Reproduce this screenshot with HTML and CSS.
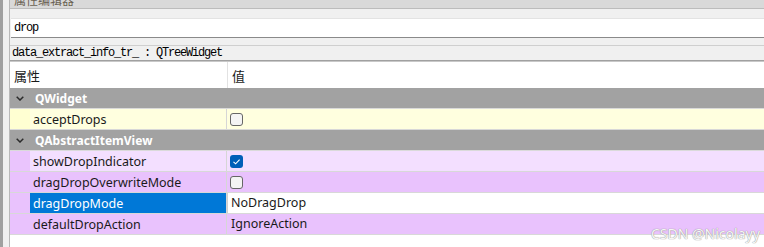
FILE: index.html
```html
<!DOCTYPE html>
<html lang="zh">
<head>
    <meta charset="UTF-8">
    <title>属性编辑器</title>
    <link rel="stylesheet" href="styles.css">
</head>
<body>
    <div class="splitter"></div>
    <div class="gutter"></div>
    <div class="panel">
        <div class="titlebar"><span>属性编辑器</span></div>
        <div class="filter">
            <div class="filter-box">drop</div>
        </div>
        <div class="objname">data_extract_info_tr_ : QTreeWidget</div>

        <div class="tree">
            <div class="row head">
                <div class="c-name">属性</div>
                <div class="c-value">值</div>
            </div>

            <div class="row group">
                <svg class="chev" width="8" height="5" viewBox="0 0 8 5"><path d="M0.7 0.7 L4 4 L7.3 0.7" fill="none" stroke="#2b2b2b" stroke-width="1.5"/></svg>
                <span>QWidget</span>
            </div>
            <div class="row prop yellow">
                <div class="indent"></div>
                <div class="c-name">acceptDrops</div>
                <div class="c-value"><span class="check"></span></div>
            </div>

            <div class="row group">
                <svg class="chev" width="8" height="5" viewBox="0 0 8 5"><path d="M0.7 0.7 L4 4 L7.3 0.7" fill="none" stroke="#2b2b2b" stroke-width="1.5"/></svg>
                <span>QAbstractItemView</span>
            </div>
            <div class="row prop pink-light">
                <div class="indent"></div>
                <div class="c-name">showDropIndicator</div>
                <div class="c-value">
                    <span class="check on">
                        <svg width="13" height="13" viewBox="0 0 13 13"><path d="M3.5 6.8 L5.6 8.8 L9.6 4.6" fill="none" stroke="#fff" stroke-width="1.1"/></svg>
                    </span>
                </div>
            </div>
            <div class="row prop pink">
                <div class="indent"></div>
                <div class="c-name">dragDropOverwriteMode</div>
                <div class="c-value"><span class="check"></span></div>
            </div>
            <div class="row prop pink selected">
                <div class="indent"></div>
                <div class="c-name">dragDropMode</div>
                <div class="c-value editor">NoDragDrop</div>
            </div>
            <div class="row prop pink">
                <div class="indent"></div>
                <div class="c-name">defaultDropAction</div>
                <div class="c-value">IgnoreAction</div>
            </div>
        </div>
    </div>

    <div class="watermark">CSDN @Nicolayy</div>
</body>
</html>
```

FILE: styles.css
```css
body {
    margin: 0;
    width: 764px;
    height: 247px;
    overflow: hidden;
    display: flex;
    background-color: #f0f0f0;
    font-family: "Noto Sans", "Noto Sans CJK SC", sans-serif;
    font-size: 12.5px;
    color: #1a1a1a;
}
.splitter {
    width: 3px;
    background-color: #a0a0a0;
}
.gutter {
    width: 6px;
}
.panel {
    flex: 1;
    display: flex;
    flex-direction: column;
    border-left: 1px solid #b9b9b9;
    min-width: 0;
}
.titlebar {
    height: 8px;
    overflow: hidden;
    background-color: #d9d9d9;
    border-bottom: 1px solid #bcbcbc;
    padding-left: 4px;
}
.titlebar span {
    display: block;
    margin-top: -7px;
    line-height: 14px;
    font-family: "Noto Sans CJK SC", sans-serif;
    font-size: 12px;
    color: #6a6152;
}
.filter {
    padding: 9px 0 7px 1px;
}
.filter-box {
    height: 18px;
    line-height: 19px;
    background-color: #ffffff;
    border-top: 1px solid #e3e3e3;
    border-bottom: 1px solid #8a8a8a;
    padding-left: 3px;
    font-family: "Liberation Mono", monospace;
    font-size: 12px;
    letter-spacing: -1.2px;
    color: #000;
}
.objname {
    height: 14px;
    line-height: 15px;
    border-top: 1px solid #cfcfcf;
    border-bottom: 1px solid #a0a0a0;
    padding: 0 0 0 2px;
    font-family: "Liberation Mono", monospace;
    font-size: 12px;
    letter-spacing: -1.2px;
    color: #000;
}
.tree {
    flex: 1;
    background-color: #ffffff;
    border-top: 1px solid #c8c8c8;
}
.row {
    display: flex;
    height: 20px;
    line-height: 22px;
    border-bottom: 1px solid #d8d8d8;
}
.row.head {
    height: 26px;
    line-height: 27px;
    border-bottom: none;
    font-family: "Noto Sans CJK SC", sans-serif;
    font-size: 13px;
}
.row.head .c-name {
    width: 213px;
    padding-left: 4px;
    border-right: 1px solid #e2e2e2;
}
.row.head .c-value {
    padding-left: 4px;
}
.row.group {
    background-color: #a2a2a2;
    align-items: center;
    color: #ffffff;
    font-size: 12px;
    font-weight: bold;
    border-bottom-color: #dadada;
}
.row.group span {
    padding-top: 1px;
}
.chev {
    margin: 1px 11px 0 6px;
}
.prop .indent {
    width: 20px;
}
.prop .c-name {
    width: 193px;
    padding-left: 3px;
    border-right: 1px solid #d6d6d6;
}
.prop .c-value {
    flex: 1;
    padding-left: 4px;
    display: flex;
    align-items: center;
}
.yellow {
    background-color: #ffffdf;
}
.yellow .indent {
    background-color: #ffffd2;
}
.pink {
    background-color: #e9c2fd;
}
.pink-light {
    background-color: #f3dfff;
}
.pink-light .indent {
    background-color: #eac4fd;
}
.selected .c-name {
    background-color: #0078d7;
    color: #ffffff;
}
.selected .editor {
    background-color: #ffffff;
    border-left: 1px solid #cfcfcf;
    padding-left: 3px;
}
.check {
    width: 11px;
    height: 11px;
    border: 1px solid #666666;
    border-radius: 3px;
    background-color: #f4f4f4;
    margin-left: -1px;
    display: flex;
}
.check.on {
    width: 13px;
    height: 13px;
    border: none;
    background-color: #005fb8;
}
.watermark {
    position: absolute;
    left: 651px;
    top: 224px;
    font-family: "Noto Sans", sans-serif;
    font-size: 14px;
    color: #f6f6f6;
    text-shadow: 0 0 1px #9a9a9a, 0 0 1px #9a9a9a;
}
```
